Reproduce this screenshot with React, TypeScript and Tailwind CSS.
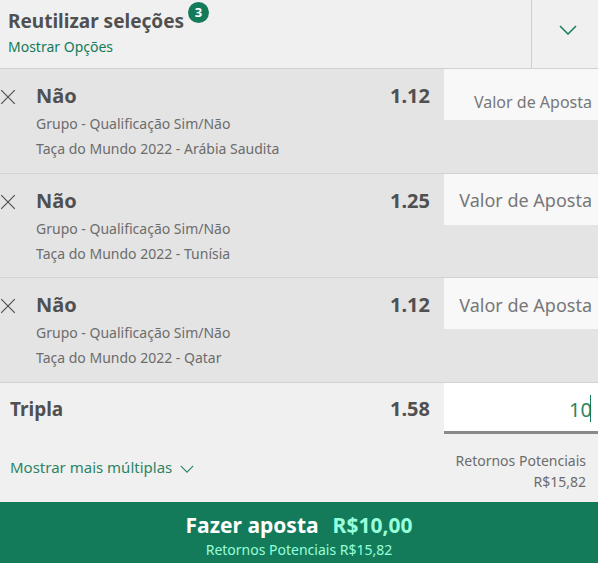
import { useState } from 'react'

interface Selection {
  id: string
  name: string
  market: string
  event: string
  odds: string
  stakeClass: string
}

const selections: Selection[] = [
  {
    id: 'arabia-saudita',
    name: 'Não',
    market: 'Grupo - Qualificação Sim/Não',
    event: 'Taça do Mundo 2022 - Arábia Saudita',
    odds: '1.12',
    stakeClass: 'pt-3.5 text-[16px]'
  },
  {
    id: 'tunisia',
    name: 'Não',
    market: 'Grupo - Qualificação Sim/Não',
    event: 'Taça do Mundo 2022 - Tunísia',
    odds: '1.25',
    stakeClass: 'pt-0.5 text-[18px]'
  },
  {
    id: 'qatar',
    name: 'Não',
    market: 'Grupo - Qualificação Sim/Não',
    event: 'Taça do Mundo 2022 - Qatar',
    odds: '1.12',
    stakeClass: 'pt-0.5 text-[18px]'
  }
]

function ChevronIcon({ className }: { className: string }) {
  return (
    <svg
      className={className}
      viewBox="0 0 18 10"
      fill="none"
      stroke="currentColor"
      strokeWidth="1.5"
      aria-hidden="true"
    >
      <path d="M1 1 L9 9 L17 1" />
    </svg>
  )
}

function CloseIcon() {
  return (
    <svg
      className="size-4"
      viewBox="0 0 16 16"
      fill="none"
      stroke="currentColor"
      strokeWidth="1.2"
      aria-hidden="true"
    >
      <path d="M1.2 1.2 L14.8 14.8 M14.8 1.2 L1.2 14.8" />
    </svg>
  )
}

function SelectionRow({ selection }: { selection: Selection }) {
  const [stake, setStake] = useState('')

  return (
    <li className="flex items-start border-b border-[#d3d3d3]">
      <button
        type="button"
        aria-label="Remover seleção"
        className="w-9 shrink-0 pt-5 text-[#505050]"
      >
        <CloseIcon />
      </button>
      <div className="flex-1 pt-3">
        <h2 className="text-[20px] leading-[30px] font-bold">{selection.name}</h2>
        <p className="text-[14px] leading-[25px] text-[#6c6c6c]">{selection.market}</p>
        <p className="text-[14px] leading-[25px] text-[#6c6c6c]">{selection.event}</p>
      </div>
      <span className="pt-3 pr-3.5 text-[20px] leading-[30px] font-bold">{selection.odds}</span>
      <input
        type="text"
        inputMode="decimal"
        aria-label={`Valor de Aposta, ${selection.event}`}
        placeholder="Valor de Aposta"
        value={stake}
        onChange={(event) => setStake(event.target.value)}
        className={`w-[154px] h-[51px] pr-1.5 bg-[#f8f8f8] text-right outline-none placeholder:text-[#777777] ${selection.stakeClass}`}
      />
    </li>
  )
}

export default function App() {
  const [stake, setStake] = useState('10')

  return (
    <main className="bg-[#f0f0f0] font-['Noto_Sans','Open_Sans',sans-serif] text-[#505050]">
      <header className="flex h-[69px] border-b border-[#d0d0d0]">
        <div className="flex-1 pl-2 pt-1.5">
          <div className="flex items-start">
            <h1 className="text-[19px] leading-[30px] font-bold">Reutilizar seleções</h1>
            <span className="flex items-center justify-center size-[21px] -mt-1 ml-1 rounded-full bg-[#147b5a] text-[13px] font-bold text-white">
              3
            </span>
          </div>
          <button type="button" className="block text-[14px] leading-[22px] text-[#147b5a]">
            Mostrar Opções
          </button>
        </div>
        <button
          type="button"
          aria-label="Minimizar"
          className="flex items-center justify-center w-[67px] pl-1.5 pb-2 border-l border-[#cfcfcf] text-[#147b5a]"
        >
          <ChevronIcon className="w-[18px] h-2.5" />
        </button>
      </header>

      <ul className="grid auto-rows-fr h-[314px] bg-[#e4e4e4]">
        {selections.map((selection) => (
          <SelectionRow key={selection.id} selection={selection} />
        ))}
      </ul>

      <section className="flex h-[119px]">
        <div className="flex-1 flex flex-col items-start pl-2.5 pt-3">
          <h2 className="text-[19px] leading-7 font-bold">Tripla</h2>
          <button
            type="button"
            className="flex items-center gap-2 mt-8 text-[15px] leading-6 text-[#2c8465]"
          >
            Mostrar mais múltiplas
            <ChevronIcon className="w-3.5 h-2 mt-1" />
          </button>
        </div>
        <span className="pt-3 pr-3.5 text-[20px] leading-7 font-bold">1.58</span>
        <div className="w-[154px]">
          <div className="relative">
            <input
              type="text"
              inputMode="decimal"
              aria-label="Valor de Aposta, Tripla"
              value={stake}
              onChange={(event) => setStake(event.target.value)}
              className="block w-full h-[51px] pr-1.5 pt-1 bg-white border-b-3 border-[#8a8a8a] text-right text-[20px] text-[#2c8465] caret-transparent outline-none"
            />
            <span className="absolute top-3 right-[7px] w-px h-[27px] bg-[#147b5a]" />
          </div>
          <p className="pt-4 pr-3 text-right text-[14px] leading-[21px] text-[#6c6c6c]">
            Retornos Potenciais
            <br />
            R$15,82
          </p>
        </div>
      </section>

      <button
        type="button"
        className="block w-full h-[61px] pt-1.5 bg-[#147b5a] text-[#97ffdb]"
      >
        <span className="flex justify-center gap-3.5 text-[21px] leading-7 font-bold">
          <span className="text-white">Fazer aposta</span>
          <span>R$10,00</span>
        </span>
        <span className="block text-[14px] leading-[22px]">Retornos Potenciais R$15,82</span>
      </button>
    </main>
  )
}
